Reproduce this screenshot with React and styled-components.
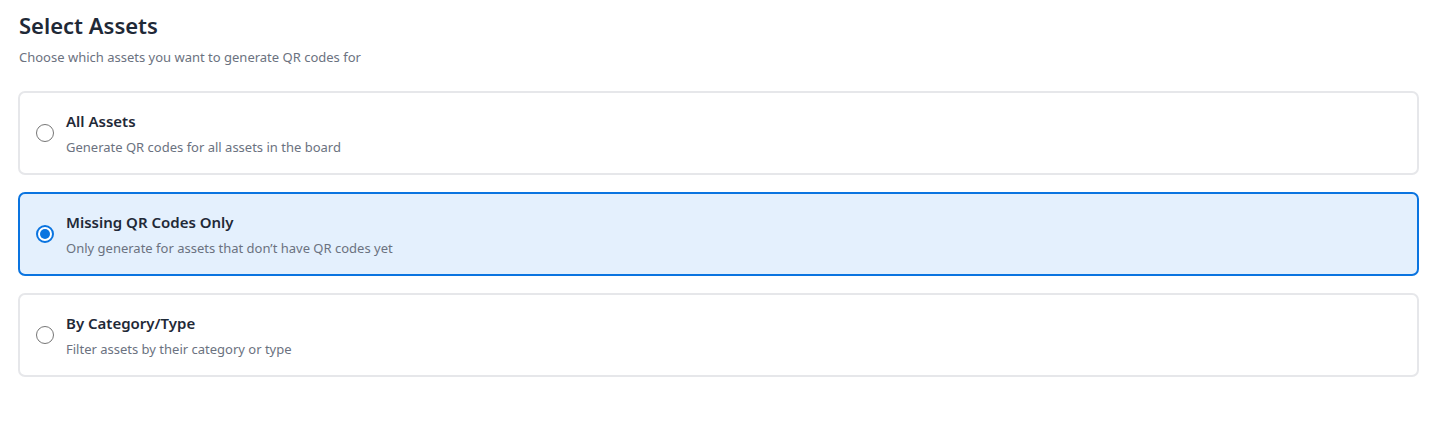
import { useState } from "react"
import styled, { createGlobalStyle } from "styled-components"

const GlobalStyle = createGlobalStyle`
  body {
    margin: 0;
    background: #ffffff;
    font-family: "Noto Sans", "Open Sans", sans-serif;
  }
`

const Page = styled.div`
  padding: 11px 20px 0 18px;
`

const Title = styled.h2`
  margin: 0 0 0 1px;
  font-size: 22px;
  line-height: 28px;
  font-weight: 600;
  color: #1f2937;
`

const Subtitle = styled.p`
  margin: 9px 0 25px 1px;
  font-size: 13px;
  line-height: 18px;
  color: #6b7280;
`

const List = styled.div`
  display: flex;
  flex-direction: column;
  gap: 17px;
`

const Card = styled.label`
  display: flex;
  align-items: center;
  gap: 12px;
  height: 84px;
  box-sizing: border-box;
  padding: 0 16px;
  border: 2px solid ${({ selected }) => (selected ? "#0a74e0" : "#e6e7ea")};
  border-radius: 7px;
  background: ${({ selected }) => (selected ? "#e4f0fd" : "#ffffff")};
  cursor: pointer;
`

const Radio = styled.span`
  flex: 0 0 18px;
  width: 18px;
  height: 18px;
  box-sizing: border-box;
  border-radius: 50%;
  border: ${({ checked }) => (checked ? "2px solid #0a74e0" : "1px solid #767676")};
  background: #ffffff;
  display: flex;
  align-items: center;
  justify-content: center;
  &::after {
    content: "";
    display: ${({ checked }) => (checked ? "block" : "none")};
    width: 10px;
    height: 10px;
    border-radius: 50%;
    background: #0a74e0;
  }
`

const Text = styled.div`
  display: flex;
  flex-direction: column;
  gap: 7px;
`

const OptionTitle = styled.span`
  font-size: 15px;
  line-height: 20px;
  font-weight: 600;
  color: #1f2937;
`

const OptionDesc = styled.span`
  font-size: 13px;
  line-height: 18px;
  color: #6b7280;
`

const options = [
  { id: "all", title: "All Assets", desc: "Generate QR codes for all assets in the board" },
  { id: "missing", title: "Missing QR Codes Only", desc: "Only generate for assets that don\u2019t have QR codes yet" },
  { id: "category", title: "By Category/Type", desc: "Filter assets by their category or type" },
]

export default function App() {
  const [selected, setSelected] = useState("missing")
  return (
    <Page>
      <GlobalStyle />
      <Title>Select Assets</Title>
      <Subtitle>Choose which assets you want to generate QR codes for</Subtitle>
      <List>
        {options.map((o) => (
          <Card key={o.id} selected={selected === o.id} onClick={() => setSelected(o.id)}>
            <Radio checked={selected === o.id} />
            <Text>
              <OptionTitle>{o.title}</OptionTitle>
              <OptionDesc>{o.desc}</OptionDesc>
            </Text>
          </Card>
        ))}
      </List>
    </Page>
  )
}
